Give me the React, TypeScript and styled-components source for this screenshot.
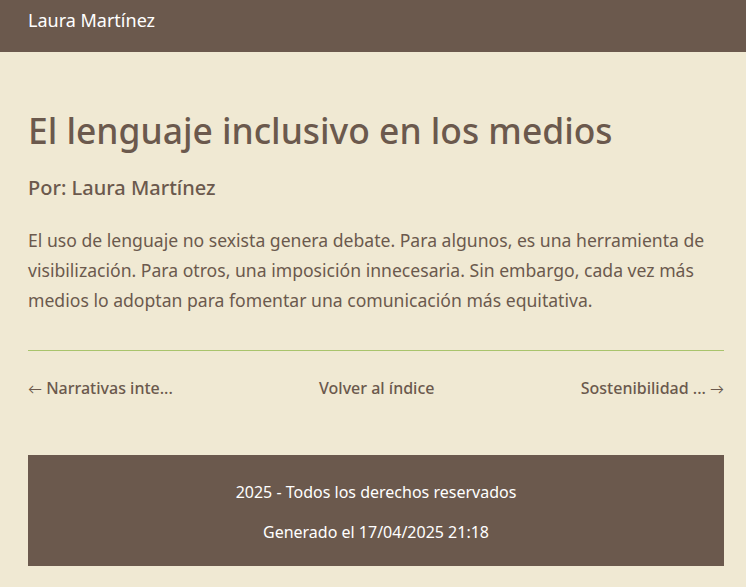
import React from "react";
import styled, { createGlobalStyle } from "styled-components";

const Global = createGlobalStyle`
  html, body { margin: 0; padding: 0; }
  body {
    background: #f0e9d3;
    font-family: "Noto Sans", "Open Sans", sans-serif;
    color: #6b594d;
  }
`;

const Header = styled.header`
  background: #6b594d;
  height: 52px;
  box-sizing: border-box;
  padding: 8px 28px 0;
`;

const Brand = styled.div`
  color: #fff;
  font-size: 18px;
  line-height: 24px;
`;

const Main = styled.main`
  padding: 0 22px 0 28px;
`;

const Title = styled.h1`
  margin: 57px 0 0;
  font-size: 35.4px;
  font-weight: 500;
  line-height: 42px;
`;

const Author = styled.h2`
  margin: 24px 0 0;
  font-size: 20px;
  font-weight: 500;
  line-height: 26px;
`;

const Body = styled.p`
  margin: 24px 0 0;
  font-size: 17.6px;
  line-height: 30px;
`;

const Divider = styled.hr`
  margin: 35px 0 0;
  border: 0;
  border-top: 1px solid #a9c46c;
`;

const Nav = styled.nav`
  display: flex;
  justify-content: space-between;
  align-items: baseline;
  height: 22px;
  margin-top: 26px;
`;

const NavLink = styled.a`
  font-size: 16px;
  font-weight: 500;
  color: #6b594d;
  text-decoration: none;
  line-height: 22px;
`;

const Arrow = styled.span`
  font-family: "Lato", "DejaVu Sans", sans-serif;
  font-size: 14px;
  font-weight: 400;
  line-height: 0;
`;

const Footer = styled.footer`
  margin-top: 56px;
  background: #6b594d;
  color: #fff;
  text-align: center;
  padding: 26px 0 23px;
`;

const FooterLine = styled.p`
  margin: 0 0 18px;
  font-size: 16px;
  line-height: 22px;
  &:last-child { margin-bottom: 0; }
`;

export default function App() {
  return (
    <>
      <Global />
      <Header>
        <Brand>Laura Martínez</Brand>
      </Header>
      <Main>
        <Title>El lenguaje inclusivo en los medios</Title>
        <Author>Por: Laura Martínez</Author>
        <Body>
          El uso de lenguaje no sexista genera debate. Para algunos, es una herramienta de
          visibilización. Para otros, una imposición innecesaria. Sin embargo, cada vez más
          medios lo adoptan para fomentar una comunicación más equitativa.
        </Body>
        <Divider />
        <Nav>
          <NavLink href="#"><Arrow>←</Arrow> Narrativas inte...</NavLink>
          <NavLink href="#">Volver al índice</NavLink>
          <NavLink href="#">Sostenibilidad ... <Arrow>→</Arrow></NavLink>
        </Nav>
        <Footer>
          <FooterLine>2025 - Todos los derechos reservados</FooterLine>
          <FooterLine>Generado el 17/04/2025 21:18</FooterLine>
        </Footer>
      </Main>
    </>
  );
}
